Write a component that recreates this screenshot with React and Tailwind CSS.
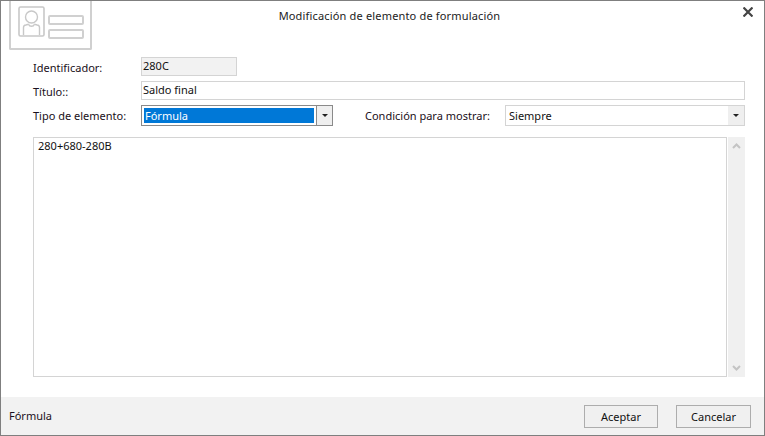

const font = { fontFamily: '"Noto Sans", sans-serif' };
function Caret() {
  return (
    <svg width="6" height="3" viewBox="0 0 6 3"><path d="M0 0h6L3 3z" fill="#222" /></svg>
  );
}
function Logo() {
  return (
    <div className="w-[83px] h-[49px] border-2 border-t-0 border-[#d0d0d0] rounded-b-[2px] flex gap-[3px] pl-[7px] pt-[5px] shrink-0">
      <svg width="27" height="31" viewBox="0 0 27 31" fill="none" stroke="#c8c8c8" strokeWidth="1.4" className="shrink-0">
        <rect x="1" y="1" width="25" height="29" rx="1.5" strokeWidth="1.6" />
        <circle cx="13.5" cy="11" r="6" />
        <path d="M5.5 29v-7.5c0-1.5 1-2.3 2.3-2.5l3-.8M21.5 29v-7.5c0-1.5-1-2.3-2.3-2.5l-3-.8M10.8 18.5c.6 2.4 4.8 2.4 5.4 0" />
      </svg>
      <div className="flex flex-col gap-[4px] pt-[9px]">
        <div className="w-[36px] h-[10px] border-2 border-[#d0d0d0] rounded-[2px]" />
        <div className="w-[36px] h-[10px] border-2 border-[#d0d0d0] rounded-[2px]" />
      </div>
    </div>
  );
}
function Label({ children, className = "" }) {
  return <div className={"text-[11px] text-[#1a1020] " + className}>{children}</div>;
}
export default function App() {
  return (
    <div style={font} className="w-[765px] h-[436px] bg-white border border-[#7f7f7f] flex flex-col overflow-hidden leading-none text-[#111]">
      <div className="flex h-[49px] pl-[8px] shrink-0">
        <Logo />
        <div className="w-[595px] pt-[9px] text-center text-[11px] tracking-[0.17px] text-[#222]">Modificación de elemento de formulación</div>
        <svg width="10" height="10" viewBox="0 0 10 10" className="mt-[6px] ml-[56px]" stroke="#444" strokeWidth="2.2"><path d="M0.5 0.5l9 9M9.5 0.5l-9 9" /></svg>
      </div>
      <div className="flex-1 flex flex-col pl-[32px] pr-[19px] pt-[7px] min-h-0">
        <div className="flex items-center h-[19px]">
          <Label className="w-[108px] pt-[2px]">Identificador:</Label>
          <div className="w-[96px] h-[19px] bg-[#f2f2f2] border border-[#d4d4d4] pl-[1px] pt-[2px] text-[11px]">280C</div>
        </div>
        <div className="flex items-center h-[19px] mt-[5px]">
          <Label className="w-[108px] pt-[1px]">Título::</Label>
          <div className="flex-1 h-[19px] border border-[#d4d4d4] pl-[1px] pt-[2px] text-[11px]">Saldo final</div>
        </div>
        <div className="flex items-center h-[21px] mt-[5px]">
          <Label className="w-[108px]">Tipo de elemento:</Label>
          <div className="w-[192px] h-[21px] border border-[#8a8a8a] flex shrink-0">
            <div className="flex-1 m-[2px] bg-[#0078d7] text-white pl-[1px] flex items-center text-[11px]">Fórmula</div>
            <div className="w-[16px] border-l border-[#8a8a8a] bg-[#efefef] flex items-center justify-center"><Caret /></div>
          </div>
          <Label className="w-[140px] ml-[32px]">Condición para mostrar:</Label>
          <div className="flex-1 h-[21px] border border-[#d4d4d4] flex">
            <div className="flex-1 pl-[3px] flex items-center text-[11px]">Siempre</div>
            <div className="w-[16px] bg-[#efefef] flex items-center justify-center"><Caret /></div>
          </div>
        </div>
        <div className="flex mt-[11px] h-[240px] gap-[1px]">
          <div className="flex-1 border border-[#d4d4d4] pl-[4px] pt-[2px] text-[11px]">280+680-280B</div>
          <div className="w-[17px] bg-[#f0f0f0] flex flex-col justify-between items-center py-[6px]">
            <svg width="9" height="6" viewBox="0 0 9 6" fill="none" stroke="#c4c4c4" strokeWidth="2"><path d="M1 5l3.5-3.5L8 5" /></svg>
            <svg width="9" height="6" viewBox="0 0 9 6" fill="none" stroke="#c4c4c4" strokeWidth="2"><path d="M1 1l3.5 3.5L8 1" /></svg>
          </div>
        </div>
      </div>
      <div className="h-[38px] bg-[#f2f2f2] shrink-0 flex items-center pl-[8px] pr-[13px]">
        <div className="flex-1 text-[11px] text-[#1a1020] pb-[2px]">Fórmula</div>
        <button className="w-[74px] h-[23px] border border-[#adadad] bg-[#f0f0f0] text-[11px] text-[#111]">Aceptar</button>
        <button className="w-[75px] h-[23px] ml-[18px] border border-[#adadad] bg-[#f0f0f0] text-[11px] text-[#111]">Cancelar</button>
      </div>
    </div>
  );
}
